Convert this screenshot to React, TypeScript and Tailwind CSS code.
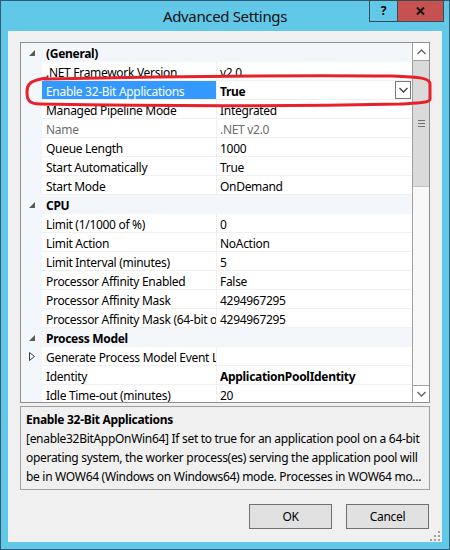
import React from "react";

type Row =
  | { type: "cat"; label: string }
  | {
      type: "prop";
      name: string;
      value: string;
      bold?: boolean;
      gray?: boolean;
      selected?: boolean;
      expander?: boolean;
    };

const rows: Row[] = [
  { type: "cat", label: "(General)" },
  { type: "prop", name: ".NET Framework Version", value: "v2.0" },
  { type: "prop", name: "Enable 32-Bit Applications", value: "True", bold: true, selected: true },
  { type: "prop", name: "Managed Pipeline Mode", value: "Integrated" },
  { type: "prop", name: "Name", value: ".NET v2.0", gray: true },
  { type: "prop", name: "Queue Length", value: "1000" },
  { type: "prop", name: "Start Automatically", value: "True" },
  { type: "prop", name: "Start Mode", value: "OnDemand" },
  { type: "cat", label: "CPU" },
  { type: "prop", name: "Limit (1/1000 of %)", value: "0" },
  { type: "prop", name: "Limit Action", value: "NoAction" },
  { type: "prop", name: "Limit Interval (minutes)", value: "5" },
  { type: "prop", name: "Processor Affinity Enabled", value: "False" },
  { type: "prop", name: "Processor Affinity Mask", value: "4294967295" },
  { type: "prop", name: "Processor Affinity Mask (64-bit option)", value: "4294967295" },
  { type: "cat", label: "Process Model" },
  { type: "prop", name: "Generate Process Model Event Log Entry", value: "", expander: true },
  { type: "prop", name: "Identity", value: "ApplicationPoolIdentity", bold: true },
  { type: "prop", name: "Idle Time-out (minutes)", value: "20" },
];

const font = { fontFamily: '"Noto Sans", "Open Sans", sans-serif' };

function CatTriangle() {
  return (
    <svg width="6" height="6" viewBox="0 0 6 6" className="block">
      <path d="M6 0 L6 6 L0 6 Z" fill="#595959" />
    </svg>
  );
}

function OpenTriangle() {
  return (
    <svg width="6" height="9" viewBox="0 0 6 9" className="block">
      <path d="M0.5 0.5 L5.5 4.5 L0.5 8.5 Z" fill="none" stroke="#404040" strokeWidth="1" />
    </svg>
  );
}

function Chevron({ up, color = "#606060" }: { up?: boolean; color?: string }) {
  return (
    <svg width="9" height="6" viewBox="0 0 9 6" className="block">
      {up ? (
        <path d="M0.5 5 L4.5 1 L8.5 5" fill="none" stroke={color} strokeWidth="1.3" />
      ) : (
        <path d="M0.5 1 L4.5 5 L8.5 1" fill="none" stroke={color} strokeWidth="1.3" />
      )}
    </svg>
  );
}

export default function App() {
  return (
    <div
      className="relative w-[450px] h-[550px] bg-[#62c8e8] border border-[#2f5d78] flex flex-col text-black"
      style={font}
    >
      {/* Title bar */}
      <div className="relative h-[30px] flex items-center justify-center">
        <span className="text-[15px] tracking-[-0.35px] leading-none mt-[1px] text-[#111]">Advanced Settings</span>
        <div className="absolute top-[-1px] right-[5px] flex h-[22px]">
          <div className="w-[28px] h-[22px] border border-[#3a4a52] border-r-0 flex items-center justify-center">
            <span className="text-[12px] font-bold leading-none">?</span>
          </div>
          <div className="w-[47px] h-[22px] bg-[#c75050] border border-[#3a4a52] flex items-center justify-center">
            <svg width="9" height="8" viewBox="0 0 9 8">
              <path d="M1 0.5 L8 7.5 M8 0.5 L1 7.5" stroke="#111" strokeWidth="2" />
            </svg>
          </div>
        </div>
      </div>

      {/* Content */}
      <div className="relative mx-[7px] mb-[7px] flex-1 bg-[#f0f0f0] px-[12px] pt-[11px] flex flex-col tracking-[-0.3px]">
        {/* Property grid */}
        <div className="h-[361px] border border-[#8f8f8f] bg-white flex overflow-hidden">
          <div className="flex-1 flex flex-col overflow-hidden text-[12px]">
            {rows.map((r, i) =>
              r.type === "cat" ? (
                <div key={i} className="h-[19px] shrink-0 flex items-center bg-[#f3f6fb]">
                  <div className="w-[21px] flex justify-center pl-[1px]">
                    <CatTriangle />
                  </div>
                  <span className="pl-[4px] pt-[3px] font-bold whitespace-nowrap">{r.label}</span>
                </div>
              ) : (
                <div key={i} className="h-[19px] shrink-0 flex">
                  <div className="w-[21px] bg-[#f3f6fb] flex items-center justify-center pl-[1px]">
                    {r.expander ? <OpenTriangle /> : null}
                  </div>
                  <div
                    className={`w-[175px] flex items-center border-b border-r border-[#f0f0f0] overflow-hidden whitespace-nowrap pl-[4px] pt-[3px] ${
                      r.selected ? "bg-[#3399ff] text-white" : r.gray ? "text-[#6d6d6d]" : ""
                    }`}
                  >
                    {r.name}
                  </div>
                  <div
                    className={`flex-1 flex items-center border-b border-[#f0f0f0] overflow-hidden whitespace-nowrap pl-[3px] pt-[3px] ${
                      r.bold ? "font-bold" : ""
                    } ${r.gray ? "text-[#6d6d6d]" : ""}`}
                  >
                    {r.value}
                  </div>
                  {r.selected ? (
                    <div className="flex items-center border-b border-[#f0f0f0] pr-[1px]">
                      <div className="w-[16px] h-[18px] border border-[#7a7a7a] bg-white flex items-center justify-center">
                        <Chevron color="#404040" />
                      </div>
                    </div>
                  ) : null}
                </div>
              )
            )}
          </div>
          {/* Scrollbar */}
          <div className="w-[17px] border-l border-[#a0a0a0] flex flex-col bg-[#f8f8f8]">
            <div className="h-[18px] bg-white border-b border-[#a0a0a0] flex items-center justify-center">
              <Chevron up />
            </div>
            <div className="h-[126px] bg-[#dadada] border-b border-[#c4c4c4] flex items-center justify-center">
              <svg width="7" height="7" viewBox="0 0 7 7">
                <path d="M0 0.5 H7 M0 3.5 H7 M0 6.5 H7" stroke="#707070" strokeWidth="1" />
              </svg>
            </div>
            <div className="flex-1" />
            <div className="h-[17px] bg-white border-t border-[#a0a0a0] flex items-center justify-center">
              <Chevron />
            </div>
          </div>
        </div>

        {/* Description */}
        <div className="mt-[3px] h-[84px] border border-[#a0a0a0] bg-[#f0f0f0] pt-[3px] pl-[5px] pr-[4px] text-[12px] leading-[19px] overflow-hidden">
          <div className="font-bold whitespace-nowrap">Enable 32-Bit Applications</div>
          <div className="whitespace-nowrap">
            [enable32BitAppOnWin64] If set to true for an application pool on a 64-bit
          </div>
          <div className="whitespace-nowrap">
            operating system, the worker process(es) serving the application pool will
          </div>
          <div className="whitespace-nowrap">
            be in WOW64 (Windows on Windows64) mode. Processes in WOW64 mo...
          </div>
        </div>

        {/* Buttons */}
        <div className="mt-[14px] flex justify-end gap-[14px] pr-[1px]">
          <button className="w-[83px] h-[25px] bg-[#e1e1e1] border border-[#707070] text-[12px] flex items-center justify-center">
            OK
          </button>
          <button className="w-[83px] h-[25px] bg-[#e1e1e1] border border-[#707070] text-[12px] flex items-center justify-center">
            Cancel
          </button>
        </div>

        {/* Resize grip */}
        <svg className="absolute right-[2px] bottom-[1px]" width="10" height="10" viewBox="0 0 10 10">
          <g fill="#a0a0a0">
            <rect x="8" y="0" width="2" height="2" />
            <rect x="4" y="4" width="2" height="2" />
            <rect x="8" y="4" width="2" height="2" />
            <rect x="0" y="8" width="2" height="2" />
            <rect x="4" y="8" width="2" height="2" />
            <rect x="8" y="8" width="2" height="2" />
          </g>
        </svg>
      </div>

      {/* Red annotation ellipse */}
      <svg className="absolute left-[-1px] top-[-1px] pointer-events-none" width="450" height="550" viewBox="0 0 450 550">
        <path
          d="M44 79 C 140 77, 300 75, 392 76 C 420 77, 430 78, 430 84 L 430 99 C 430 103, 418 103, 400 104 C 300 106, 150 106, 40 104 C 29 104, 27 100, 27 92 C 27 84, 30 80, 48 78"
          fill="none"
          stroke="#e8202a"
          strokeWidth="3"
        />
      </svg>
    </div>
  );
}
